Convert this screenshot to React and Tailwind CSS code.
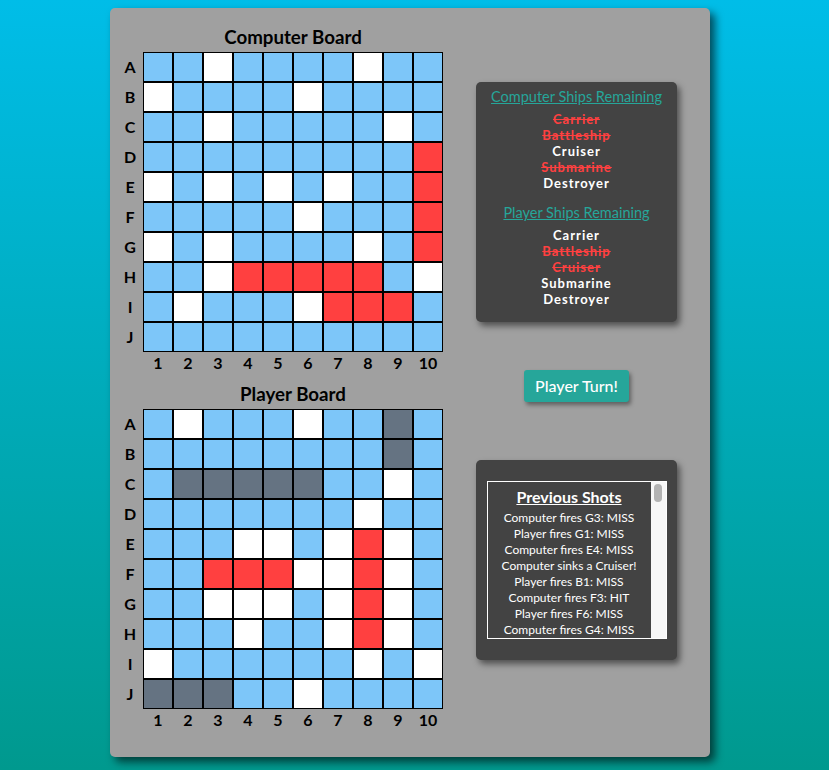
import { useState } from "react"

const computerRows = [
  "bbwbbbbwbb",
  "wbbbbwbbbb",
  "bbwbbbbbwb",
  "bbbbbbbbbr",
  "wbwbwbwbbr",
  "bbbbbwbbbr",
  "wbwbbbbwbr",
  "bbwrrrrrbw",
  "bwbbbwrrrb",
  "bbbbbbbbbb",
]

const playerRows = [
  "bwbbbwbbsb",
  "bbbbbbbbsb",
  "bsssssbbwb",
  "bbbbbbbwbb",
  "bbbwwbwrwb",
  "bbrrrwwrwb",
  "bbwwwbwrwb",
  "bbbwbbwrwb",
  "wbbbbbbwbw",
  "sssbbwbbbb",
]

const letters = ["A","B","C","D","E","F","G","H","I","J"]

const cellColor = {
  b: "bg-[#7dc6f9]",
  w: "bg-white",
  r: "bg-[#ff4040]",
  s: "bg-[#657382]",
}

const computerShips = [
  { name: "Carrier", sunk: true },
  { name: "Battleship", sunk: true },
  { name: "Cruiser", sunk: false },
  { name: "Submarine", sunk: true },
  { name: "Destroyer", sunk: false },
]

const playerShips = [
  { name: "Carrier", sunk: false },
  { name: "Battleship", sunk: true },
  { name: "Cruiser", sunk: true },
  { name: "Submarine", sunk: false },
  { name: "Destroyer", sunk: false },
]

const shots = [
  "Computer fires G3: MISS",
  "Player fires G1: MISS",
  "Computer fires E4: MISS",
  "Computer sinks a Cruiser!",
  "Player fires B1: MISS",
  "Computer fires F3: HIT",
  "Player fires F6: MISS",
  "Computer fires G4: MISS",
]

const Board = ({ title, rows }) => {
  return (
    <div className="flex flex-col">
      <h3 className="ml-[26px] w-[300px] text-center text-[18.72px] font-bold leading-[29px] text-black">{title}</h3>

      <div className="flex flex-col">
        {rows.map((row, r) => (
          <div key={r} className="flex">
            <div className="w-[26px] h-[30px] flex items-center justify-center text-[16px] font-bold text-black">{letters[r]}</div>
            {row.split("").map((c, i) => (
              <div key={i} className={`w-[30px] h-[30px] border border-black ${cellColor[c]}`}></div>
            ))}
          </div>
        ))}
      </div>

      <div className="flex h-[22px] items-center">
        <div className="w-[26px]"></div>
        {letters.map((_, i) => (
          <div key={i} className="w-[30px] text-center text-[16px] font-bold text-black">{i + 1}</div>
        ))}
      </div>
    </div>
  )
}

const ShipList = ({ ships }) => {
  return (
    <ul className="mt-[4px] flex flex-col">
      {ships.map((s) => (
        <li
          key={s.name}
          className={`text-[13px] font-bold leading-[16px] tracking-[1px] ${s.sunk ? "text-[#ff4040] line-through" : "text-white"}`}
        >
          {s.name}
        </li>
      ))}
    </ul>
  )
}

const App = () => {
  const [turn] = useState("Player Turn!")

  return (
    <div className="min-h-screen bg-linear-to-b from-[#00bde8] to-[#00998e] pt-[8px] pb-[13px] font-['Lato',sans-serif]">
      <div className="ml-[110px] w-[600px] h-[749px] bg-[#a0a0a0] rounded-[5px] shadow-[5px_5px_9px_rgba(0,0,0,0.6)] flex">

        <div className="pl-[7px] pt-[15px] flex flex-col">
          <Board title="Computer Board" rows={computerRows} />
          <div className="mt-[6px]">
            <Board title="Player Board" rows={playerRows} />
          </div>
        </div>

        <div className="ml-[33px] w-[201px] pt-[74px] flex flex-col items-center">
          <div className="w-[201px] h-[240px] bg-[#434343] rounded-[5px] shadow-[3px_4px_6px_rgba(0,0,0,0.5)] pt-[5px] flex flex-col items-center text-center">
            <h4 className="text-[14.5px] leading-[20px] text-[#26a69a] underline">Computer Ships Remaining</h4>
            <ShipList ships={computerShips} />
            <h4 className="mt-[12px] text-[14.5px] leading-[20px] text-[#26a69a] underline">Player Ships Remaining</h4>
            <ShipList ships={playerShips} />
          </div>

          <button className="mt-[48px] w-[105px] h-[32px] bg-[#26a69a] text-white text-[16px] font-medium rounded-[3px] shadow-[2px_3px_4px_rgba(0,0,0,0.4)]">
            {turn}
          </button>

          <div className="mt-[58px] w-[201px] h-[200px] bg-[#434343] rounded-[5px] shadow-[3px_4px_6px_rgba(0,0,0,0.5)] flex items-center justify-center">
            <div className="w-[180px] h-[158px] border border-white flex overflow-hidden">
              <div className="flex-1 pt-[5px] flex flex-col items-center text-center text-white overflow-hidden">
                <h4 className="text-[16px] font-bold leading-[20px] underline">Previous Shots</h4>
                <ul className="mt-[3px]">
                  {shots.map((s, i) => (
                    <li key={i} className="text-[12px] leading-[16px] whitespace-nowrap">{s}</li>
                  ))}
                </ul>
              </div>
              <div className="w-[15px] bg-[#f7f7f7] flex justify-center pt-[2px]">
                <div className="w-[8px] h-[18px] rounded-full bg-[#b3b3b3]"></div>
              </div>
            </div>
          </div>
        </div>

      </div>
    </div>
  )
}

export default App
